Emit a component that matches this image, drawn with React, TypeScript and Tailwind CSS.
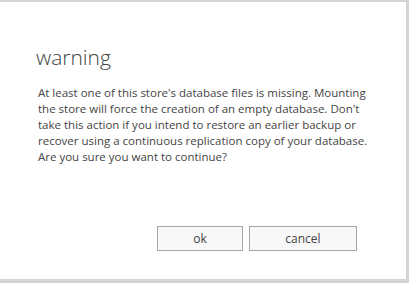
export default function App() {
  return (
    <div className="w-[409px] h-[283px] bg-[#d4d4d4] pt-[2px] pr-[3px] pb-[4px] font-['Segoe_UI','Open_Sans',sans-serif] text-[#333333]">
      <div className="h-full bg-white pl-[36px] pr-[26px] pt-[41px] flex flex-col">
        <h1 className="text-[21px] font-light leading-[28px] text-[#444444]">warning</h1>
        <p className="mt-[14px] pl-[2px] text-[11.5px] leading-[16px] text-[#444444]">
          At least one of this store's database files is missing. Mounting the store will force the creation of an empty
          database. Don't take this action if you intend to restore an earlier backup or recover using a continuous
          replication copy of your database. Are you sure you want to continue?
        </p>
        <div className="mt-auto mb-[28px] flex justify-end gap-[6px] pr-[23px]">
          <button className="w-[86px] h-[25px] border border-[#a6a6a6] bg-[#f8f8f8] text-[12px] text-[#444444]">ok</button>
          <button className="w-[108px] h-[25px] border border-[#a6a6a6] bg-[#f8f8f8] text-[12px] text-[#444444]">cancel</button>
        </div>
      </div>
    </div>
  );
}
